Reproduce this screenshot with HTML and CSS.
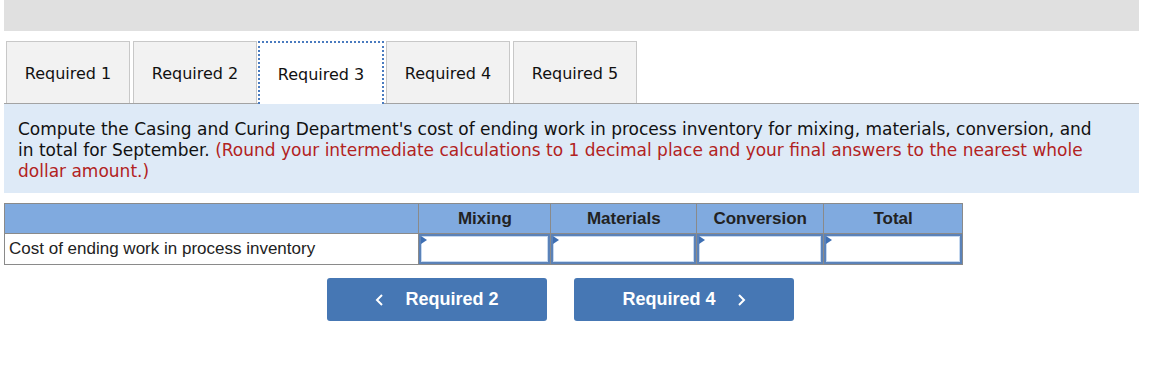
FILE: index.html
```html
<!doctype html>
<html>
    <head>
        <link rel="stylesheet" href="styles.css">
    </head>
    <body>
        <div class="page">
            <div class="topbar"></div>

            <div class="tabs">
                <span class="tab">Required 1</span>
                <span class="tab">Required 2</span>
                <span class="tab active">Required 3</span>
                <span class="tab">Required 4</span>
                <span class="tab">Required 5</span>
            </div>

            <div class="question">
                Compute the Casing and Curing Department's cost of ending work in process inventory for mixing, materials, conversion, and in total for September.
                <span class="hint">(Round your intermediate calculations to 1 decimal place and your final answers to the nearest whole dollar amount.)</span>
            </div>

            <table class="grid">
                <tr class="head">
                    <th class="label"></th>
                    <th class="c-mix">Mixing</th>
                    <th class="c-mat">Materials</th>
                    <th class="c-conv">Conversion</th>
                    <th class="c-tot">Total</th>
                </tr>
                <tr>
                    <td class="label">Cost of ending work in process inventory</td>
                    <td class="cell"><div class="input"></div></td>
                    <td class="cell"><div class="input"></div></td>
                    <td class="cell"><div class="input"></div></td>
                    <td class="cell"><div class="input"></div></td>
                </tr>
            </table>

            <div class="nav">
                <span class="btn">
                    <svg width="10" height="14" viewBox="0 0 10 14"><polyline points="7,2 2,7 7,12" fill="none" stroke="#fff" stroke-width="2"/></svg>
                    <b>Required 2</b>
                </span>
                <span class="btn">
                    <b>Required 4</b>
                    <svg width="10" height="14" viewBox="0 0 10 14"><polyline points="3,2 8,7 3,12" fill="none" stroke="#fff" stroke-width="2"/></svg>
                </span>
            </div>
        </div>
    </body>
</html>
```

FILE: styles.css
```css
body {
    margin: 0;
    background: #fff;
}
.page {
    width: 1135px;
    margin-left: 4px;
}
.topbar {
    height: 31px;
    background-color: #e0e0e0;
}

/* tabs */
.tabs {
    margin-top: 10px;
    padding-left: 2px;
    display: flex;
    border-bottom: 1px solid #a3a3a3;
}
.tab {
    box-sizing: border-box;
    width: 124px;
    height: 62px;
    margin-right: 3px;
    padding-top: 2px;
    display: flex;
    align-items: center;
    justify-content: center;
    background-color: #f2f2f2;
    border: 1px solid #c8c8c8;
    border-bottom: none;
    font-family: "DejaVu Sans", Verdana, sans-serif;
    font-size: 16px;
    color: #111;
}
.tab.active {
    width: 126px;
    margin-left: -2px;
    margin-right: 2px;
    height: 63px;
    margin-bottom: -1px;
    background-color: #fff;
    border: 2px dotted #4a7bbf;
    border-bottom: none;
}

/* question box */
.question {
    background-color: #deeaf7;
    padding: 15px 41px 11px 14px;
    font-family: "DejaVu Sans", Verdana, sans-serif;
    font-size: 17px;
    line-height: 21px;
    color: #111;
}
.hint {
    color: #b22222;
}

/* answer table */
.grid {
    margin-top: 10px;
    width: 959px;
    border-collapse: collapse;
    font-family: "Liberation Sans", Arial, sans-serif;
    font-size: 17px;
    color: #222;
}
.grid th, .grid td {
    border: 1px solid #8a8a8a;
    padding: 0;
}
.grid .head th {
    height: 29px;
    background-color: #80aadf;
    font-weight: bold;
    text-align: center;
}
.grid td.label {
    width: 410px;
    height: 30px;
    padding-left: 4px;
}
.c-mix { width: 131px; }
.c-mat { width: 145px; }
.c-conv { width: 126px; }
.c-tot { width: 138px; }
.input {
    box-sizing: border-box;
    height: 30px;
    border: 2px solid #5b82b8;
    box-shadow: inset 0 0 0 1px #c5d8ef;
    background: #fff;
    position: relative;
}
.input::before {
    content: '';
    position: absolute;
    left: 0;
    top: 0;
    border-left: 6px solid #3e6fb3;
    border-top: 4px solid transparent;
    border-bottom: 4px solid transparent;
}

/* nav buttons */
.nav {
    margin-top: 13px;
    padding-left: 323px;
    display: flex;
    gap: 27px;
}
.btn {
    box-sizing: border-box;
    width: 220px;
    height: 43px;
    display: flex;
    align-items: center;
    justify-content: center;
    gap: 20px;
    background-color: #4677b4;
    border-radius: 3px;
    color: #fff;
    font-family: "Liberation Sans", Arial, sans-serif;
    font-size: 18px;
}
```
